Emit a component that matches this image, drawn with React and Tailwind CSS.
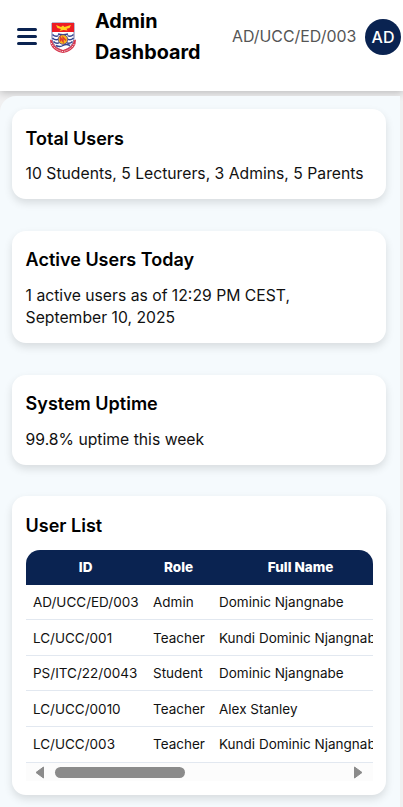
const users = [
  ["AD/UCC/ED/003", "Admin", "Dominic Njangnabe"],
  ["LC/UCC/001", "Teacher", "Kundi Dominic Njangnabe"],
  ["PS/ITC/22/0043", "Student", "Dominic Njangnabe"],
  ["LC/UCC/0010", "Teacher", "Alex Stanley"],
  ["LC/UCC/003", "Teacher", "Kundi Dominic Njangnabe"],
];

function Crest() {
  return (
    <svg width="28" height="32" viewBox="0 0 28 32" className="shrink-0">
      <path d="M3 1h22v14c0 7-4 11-11 14C7 26 3 22 3 15z" fill="#fff" stroke="#53528e" strokeWidth=".8" />
      <path d="M3 1h22v9H3z" fill="#ed1c24" />
      <path d="M7 3l5 2 2-1.500L15.500 5 22 3 20.500 6l-3 .8 1 1.700-4-.4-4 .8 1.500-1.900L8.500 6z" fill="#ffd21f" />
      <path d="M3.500 12.500q3 3 6 1M3.500 16q3 3 6 1M4.500 19.500q3 3 6 1M7 23.500q4 2 7 0t7 0M24.500 12.500q-3 3-6 1M24.500 16q-3 3-6 1M23.500 19.500q-3 3-6 1M9 12q5 1.500 10 0" fill="none" stroke="#34438f" strokeWidth="1.500" />
      <circle cx="14" cy="17.500" r="4.800" fill="#f6b51e" stroke="#4b3c88" strokeWidth=".8" />
      <path d="M11.500 19.500v-4l2.500 4v-4l3 3" fill="none" stroke="#e23b2e" strokeWidth="1.400" />
      <path d="M1 17.500l2.200 1c.8 5 4.800 8 10.800 9.500 6-1.500 10-4.500 10.800-9.500l2.200-1-.5 4.500c-2 5-6.500 8-12.500 9C8 30 3.500 27 1.500 22z" fill="#d6354c" />
      <path d="M2.300 21c2 4.500 6 7.500 11.700 8.600 5.700-1.100 9.700-4.100 11.700-8.600" fill="none" stroke="#f4dce3" strokeWidth="1" strokeDasharray="1.300 1" />
    </svg>
  );
}

function Card({ title, className, children }) {
  return (
    <section className={"rounded-[14px] bg-white px-[13.600px] shadow-[0_4px_8px_rgba(0,0,0,0.12)] " + className}>
      <h2 className="text-[18px] leading-[27px] font-semibold text-black">{title}</h2>
      {children}
    </section>
  );
}

export default function App() {
  return (
    <div className="h-[807px] w-[403px] overflow-hidden bg-[#f0f0f1] font-['Inter',sans-serif] text-[#111]">
      <header className="flex h-[91px] items-start bg-white pl-[16.500px] shadow-[0_2px_8px_rgba(0,0,0,0.22)]">
        <button aria-label="Menu" className="mt-[28px] flex w-[20.500px] shrink-0 flex-col gap-[4.600px]">
          <span className="h-[2.600px] rounded-sm bg-[#0a2351]" />
          <span className="h-[2.600px] rounded-sm bg-[#0a2351]" />
          <span className="h-[2.600px] rounded-sm bg-[#0a2351]" />
        </button>
        <div className="mt-[22px] ml-[12px]"><Crest /></div>
        <h1 className="mt-[6px] ml-[18px] w-[137px] text-[19.800px] leading-[31px] font-bold text-black">Admin Dashboard</h1>
        <span className="mt-[25px] text-[15.900px] leading-6 whitespace-nowrap text-[#555]">AD/UCC/ED/003</span>
        <div className="mt-[19px] ml-auto mr-[2px] flex size-9 items-center justify-center rounded-full bg-[#0a2351] pb-px text-[16px] font-medium text-white">AD</div>
      </header>
      <main className="mt-[5px] flex h-[711px] w-[400px] flex-col rounded-tl-[16px] bg-[#f5fafd] pt-[13px] pr-[14px] pl-3">
        <Card title="Total Users" className="h-[90px] pt-4">
          <p className="mt-[10.500px] text-[15.730px] leading-[22px] whitespace-nowrap">10 Students, 5 Lecturers, 3 Admins, 5 Parents</p>
        </Card>
        <Card title="Active Users Today" className="mt-8 h-[112px] pt-[15px]">
          <p className="mt-3 text-[15.730px] leading-[22px]">1 active users as of 12:29 PM CEST,<br />September 10, 2025</p>
        </Card>
        <Card title="System Uptime" className="mt-8 h-[90px] pt-[15px]">
          <p className="mt-3 text-[15.730px] leading-[22px]">99.8% uptime this week</p>
        </Card>
        <Card title="User List" className="mt-[31px] h-[299px] pt-4">
          <div className="mt-[11px] w-[347px] overflow-hidden rounded-t-[14px]">
            <table className="w-[364px] table-fixed border-separate border-spacing-0 text-[13.500px] leading-[20px]">
              <colgroup><col className="w-[120px]" /><col className="w-[66px]" /><col className="w-[178px]" /></colgroup>
              <thead>
                <tr className="h-[34.800px] bg-[#0a2351] text-center text-white">
                  <th className="p-0 pb-px font-extrabold">ID</th>
                  <th className="p-0 pb-px font-extrabold">Role</th>
                  <th className="p-0 pb-px font-extrabold">Full Name</th>
                </tr>
              </thead>
              <tbody>
                {users.map((u) => (
                  <tr key={u[0]} className="h-[35.550px]">
                    {u.map((v, i) => <td key={i} className="border-b border-[#e2e8f0] p-0 pl-[7.400px] whitespace-nowrap">{v}</td>)}
                  </tr>
                ))}
              </tbody>
            </table>
            <div className="flex h-[18.500px] items-center bg-[#fcfcfc] px-[9.500px] pt-px">
              <svg width="10" height="13" viewBox="0 0 10 13"><path d="M8.500 1v11L1 6.500z" fill="#8b8b8b" stroke="#8b8b8b" strokeLinejoin="round" /></svg>
              <div className="ml-[9.500px] h-[11px] w-[130px] rounded-full bg-[#8b8b8b]" />
              <svg width="10" height="13" viewBox="0 0 10 13" className="ml-auto"><path d="M1.500 1v11L9 6.500z" fill="#8b8b8b" stroke="#8b8b8b" strokeLinejoin="round" /></svg>
            </div>
          </div>
        </Card>
      </main>
    </div>
  );
}
